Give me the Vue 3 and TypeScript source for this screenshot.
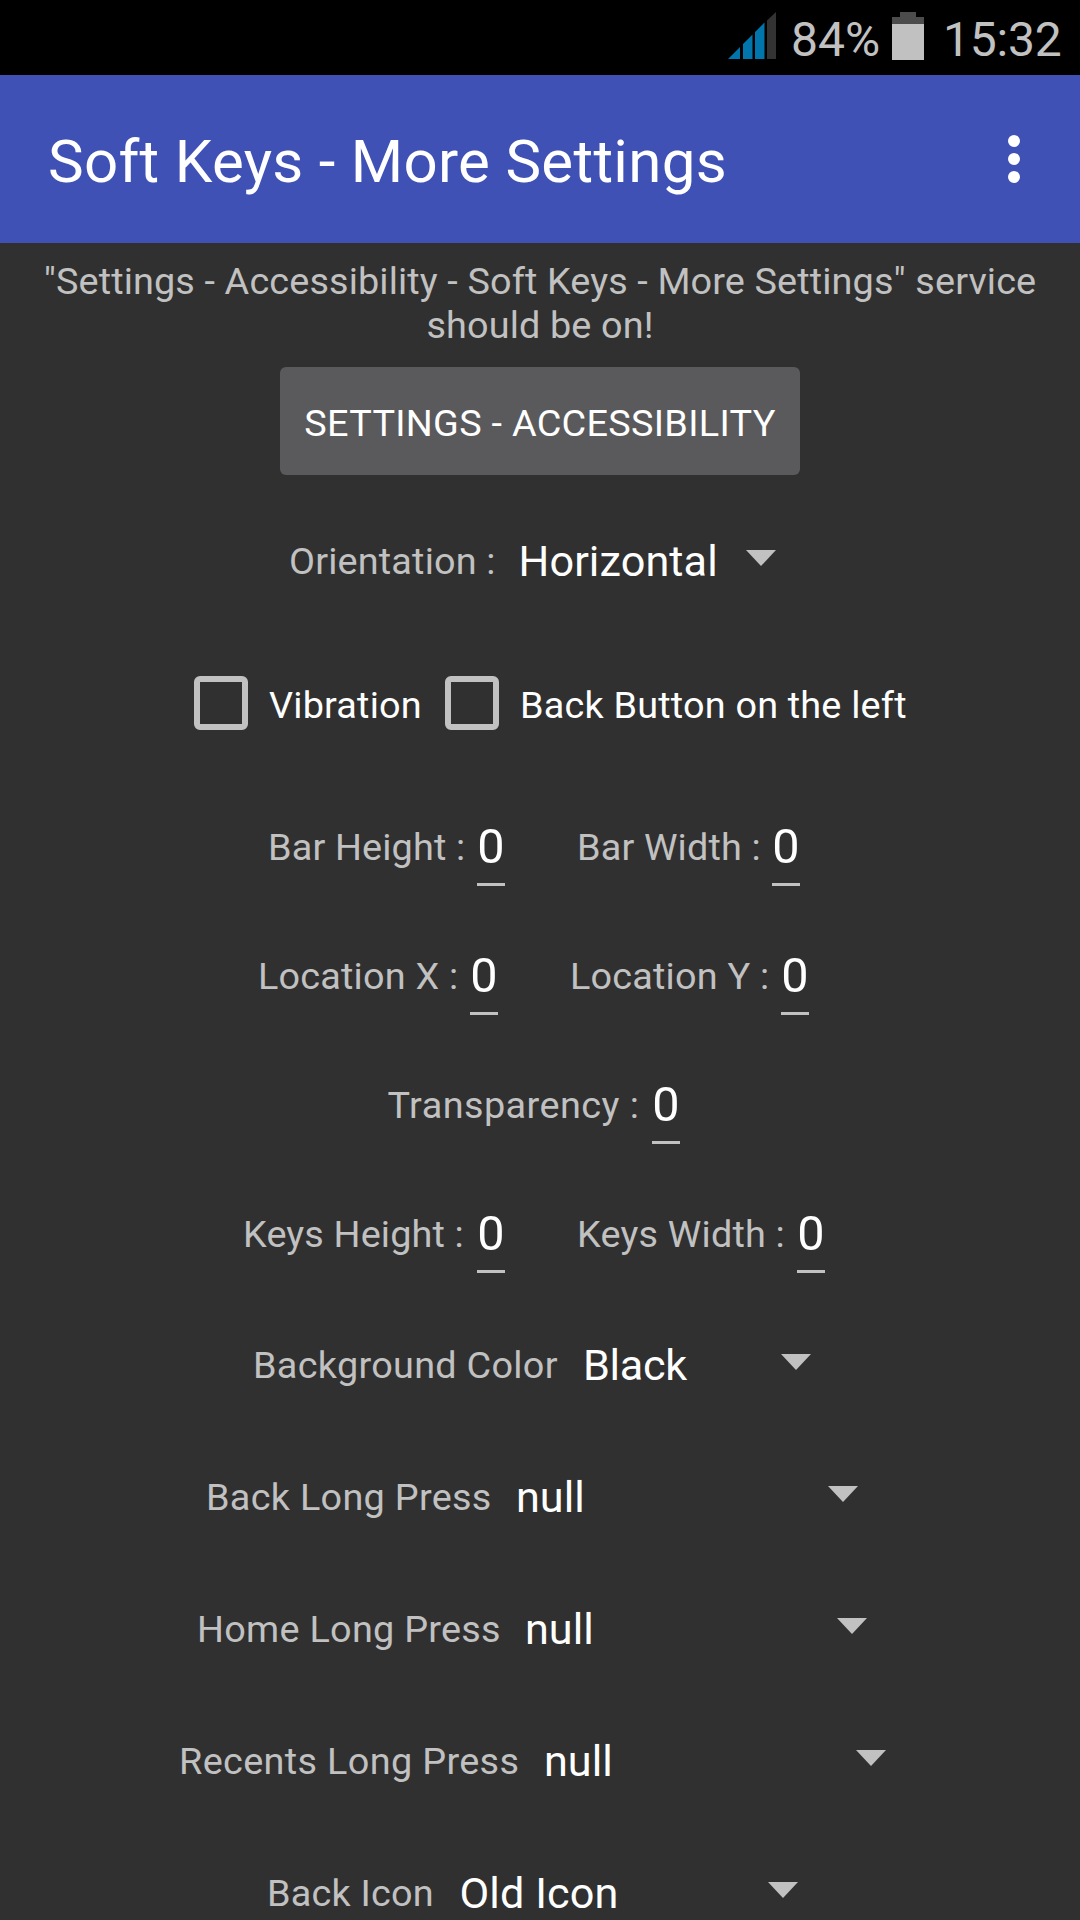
<script setup lang="ts">
interface Field { label: string; value: string; width: number; gap: number; tracking: number }
interface Choice { label: string; value: string; start: number; width: number; valueWidth: number; tracking: number; valueTracking: number }

const fieldRows: { start: number; fields: Field[] }[] = [
  { start: 268, fields: [{ label: 'Bar Height :', value: '0', width: 197, gap: 60, tracking: 0.15 }, { label: 'Bar Width :', value: '0', width: 183, gap: 0, tracking: 0.15 }] },
  { start: 258, fields: [{ label: 'Location X :', value: '0', width: 200, gap: 60, tracking: 0.2 }, { label: 'Location Y :', value: '0', width: 199, gap: 0, tracking: 0.2 }] },
  { start: 387.5, fields: [{ label: 'Transparency :', value: '0', width: 252.5, gap: 0, tracking: 0.45 }] },
  { start: 243, fields: [{ label: 'Keys Height :', value: '0', width: 222, gap: 60, tracking: 0.15 }, { label: 'Keys Width :', value: '0', width: 208, gap: 0, tracking: 0.2 }] },
]

const orientation: Choice = { label: 'Orientation :', value: 'Horizontal', start: 289, width: 229.5, valueWidth: 227.5, tracking: 0.18, valueTracking: 0.1 }
const choices: Choice[] = [
  { label: 'Background Color', value: 'Black', start: 253, width: 330, valueWidth: 198, tracking: 0.3, valueTracking: -0.3 },
  { label: 'Back Long Press', value: 'null', start: 206, width: 310, valueWidth: 312, tracking: 0.3, valueTracking: 0 },
  { label: 'Home Long Press', value: 'null', start: 197, width: 328, valueWidth: 312, tracking: 0.27, valueTracking: 0 },
  { label: 'Recents Long Press', value: 'null', start: 179, width: 365, valueWidth: 312, tracking: 0.35, valueTracking: 0 },
  { label: 'Back Icon', value: 'Old Icon', start: 267, width: 192.5, valueWidth: 308.5, tracking: 0.2, valueTracking: 0.1 },
]
</script>

<template>
  <div class="screen">
    <header class="status">
      <svg class="signal" width="48" height="48" viewBox="0 0 48 48">
        <path fill="#0076ac" d="M0 47L12 35V47ZM15 47V32L24.500 22.500V47ZM27 47V20L36.500 10.500V47Z" />
        <path fill="#333" d="M39 47V8.500L48 0V47Z" />
      </svg>
      <span class="percent">84%</span>
      <svg class="battery" width="32" height="48" viewBox="0 0 32 48">
        <path fill="#4c4c4c" d="M8 0H24V5H32V12H0V5H8Z" />
        <rect y="12" width="32" height="36" fill="#c1c1c1" />
      </svg>
      <span class="clock">15:32</span>
    </header>
    <div class="appbar">
      <h1>Soft Keys - More Settings</h1>
      <svg class="more" width="12" height="48" viewBox="0 0 12 48" fill="#fff">
        <circle cx="6" cy="6" r="6" /><circle cx="6" cy="24" r="6" /><circle cx="6" cy="42" r="6" />
      </svg>
    </div>
    <main>
      <p class="notice"><span>"Settings - Accessibility - Soft Keys - More Settings" service</span><br><span>should be on!</span></p>
      <button class="access" type="button">SETTINGS - ACCESSIBILITY</button>
      <div class="choice first" :style="{ paddingLeft: orientation.start + 'px' }">
        <span class="label" :style="{ width: orientation.width + 'px', letterSpacing: orientation.tracking + 'px' }">{{ orientation.label }}</span>
        <span class="value" :style="{ width: orientation.valueWidth + 'px', letterSpacing: orientation.valueTracking + 'px' }">{{ orientation.value }}</span>
        <svg class="arrow" width="30" height="16"><path d="M0 0H30L15 16Z" fill="#c1c1c1" /></svg>
      </div>
      <div class="checks">
        <i class="box"></i><span class="vibration">Vibration</span>
        <i class="box"></i><span>Back Button on the left</span>
      </div>
      <div v-for="(row, i) in fieldRows" :key="i" class="fields" :style="{ paddingLeft: row.start + 'px' }">
        <div v-for="f in row.fields" :key="f.label" class="field" :style="{ marginRight: f.gap + 'px' }">
          <span class="label" :style="{ width: f.width + 'px', letterSpacing: f.tracking + 'px' }">{{ f.label }}</span>
          <span class="entry">{{ f.value }}</span>
        </div>
      </div>
      <div v-for="c in choices" :key="c.label" class="choice" :style="{ paddingLeft: c.start + 'px' }">
        <span class="label" :style="{ width: c.width + 'px', letterSpacing: c.tracking + 'px' }">{{ c.label }}</span>
        <span class="value" :style="{ width: c.valueWidth + 'px', letterSpacing: c.valueTracking + 'px' }">{{ c.value }}</span>
        <svg class="arrow" width="30" height="16"><path d="M0 0H30L15 16Z" fill="#c1c1c1" /></svg>
      </div>
    </main>
  </div>
</template>

<style>
body { background: #303030; }
</style>

<style scoped>
.screen { width: 1080px; height: 1920px; overflow: hidden; background: #303030; color: #c1c1c1; font-family: Roboto, sans-serif; font-size: 37.8px; white-space: nowrap; }
.status { height: 75px; background: #000; display: flex; font-size: 48px; line-height: 57px; color: #c1c1c1; }
.signal { margin: 12px 0 0 728px; flex: none; }
.percent { width: 101px; padding-top: 11px; padding-left: 15px; }
.battery { margin-top: 12px; flex: none; }
.clock { padding: 11px 0 0 19px; letter-spacing: -0.2px; }
.appbar { height: 168px; background: #3f51b5; display: flex; justify-content: space-between; color: #fff; }
h1 { margin: 0; padding: 51px 0 0 48px; font-size: 60px; line-height: 71px; font-weight: 400; letter-spacing: 0.3px; }
.more { margin: 60px 60px 0 0; flex: none; }
main { display: flex; flex-direction: column; }
.notice { margin: 16px 0 0; height: 90px; text-align: center; line-height: 44px; letter-spacing: 0.13px; }
.access { align-self: center; margin-top: 18px; width: 520px; height: 108px; padding: 4px 0 0; border: 0; border-radius: 6px; background: #5a5a5c; color: #fff; font: 400 37.8px/44px Roboto, sans-serif; letter-spacing: 0.3px; white-space: nowrap; }
.choice { height: 132px; display: flex; align-items: flex-start; flex: none; box-sizing: border-box; padding-top: 18px; }
.choice .label { line-height: 44px; padding-top: 4px; flex: none; }
.value { color: #fff; font-size: 43.2px; line-height: 51px; padding-top: 1px; flex: none; }
.arrow { margin-top: 15px; flex: none; }
.choice.first { height: 201px; padding-top: 60px; }
.checks { height: 129px; padding-left: 194px; display: flex; align-items: flex-start; line-height: 44px; color: #fff; letter-spacing: 0.2px; }
.box { width: 42px; height: 42px; border: 6px solid #c1c1c1; border-radius: 6px; flex: none; margin-right: 21px; }
.checks span { padding-top: 7px; }
.checks .vibration { width: 176px; }
.fields { height: 129px; display: flex; flex: none; }
.field { display: flex; }
.fields .label { padding-top: 20px; line-height: 44px; flex: none; }
.entry { margin: 13px 12px 0; width: 28px; height: 65px; border-bottom: 3px solid #c1c1c1; color: #fff; font-size: 48.6px; line-height: 57px; text-align: center; }
</style>
